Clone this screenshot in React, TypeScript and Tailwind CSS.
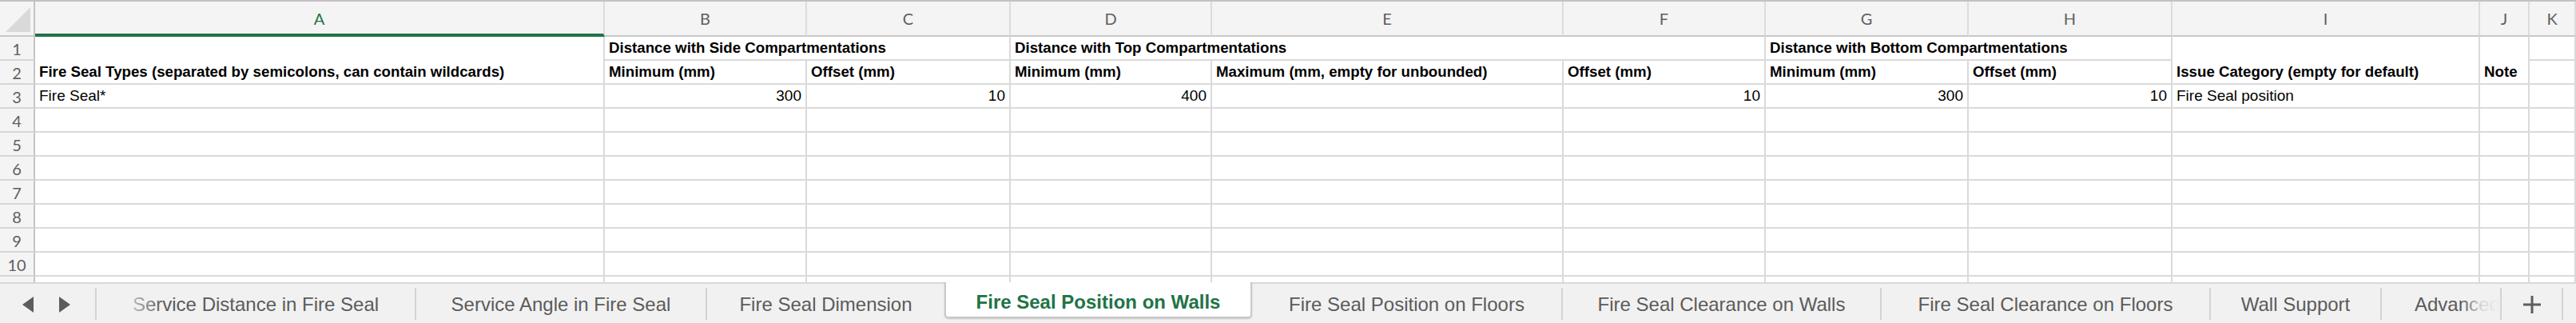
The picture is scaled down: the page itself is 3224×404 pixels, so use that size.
import React from 'react'

const LETTERS = ['A', 'B', 'C', 'D', 'E', 'F', 'G', 'H', 'I', 'J', 'K']
const cellFont = { fontFamily: '"Liberation Sans", Arial, sans-serif' }
const headFont = { fontFamily: 'Lato, "Liberation Sans", sans-serif' }

type CellProps = { children?: React.ReactNode; right?: boolean; bold?: boolean; span?: string }

function Cell({ children, right, bold, span = '' }: CellProps) {
  return (
    <div
      className={`flex items-end whitespace-nowrap border-r-2 border-b-2 border-[#dadada] bg-white px-[5px] pb-[3px] leading-[22px] text-black ${right ? 'justify-end' : ''} ${bold ? 'text-[18.7px] font-bold' : 'text-[19px]'} ${span}`}
    >
      {children}
    </div>
  )
}

function RowHead({ n }: { n?: number }) {
  return (
    <div
      style={headFont}
      className="flex items-center justify-center border-r-2 border-b-2 border-r-[#c4c4c4] border-b-[#d6d6d6] bg-[#f4f4f4] pt-[1px] text-[20px] text-[#5f5f5f]"
    >
      {n}
    </div>
  )
}

const row3 = ['Fire Seal*', '300', '10', '400', '', '10', '300', '10', 'Fire Seal position', '', '']
const row3Right = [false, true, true, true, false, true, true, true, false, false, false]

function Grid() {
  return (
    <div
      style={cellFont}
      className="grid h-[353px] grid-cols-[44px_713px_253px_255px_252px_440px_253px_254px_255px_385px_62px_1fr] grid-rows-[44px_repeat(11,30px)] overflow-hidden border-t-2 border-[#c2c2c2]"
    >
      {/* corner */}
      <div className="relative border-r-2 border-b-2 border-r-[#c4c4c4] border-b-[#c8c8c8] bg-[#f4f4f4]">
        <svg className="absolute left-[7px] top-[7px]" width="31" height="31" viewBox="0 0 31 31">
          <polygon points="31,0 31,31 0,31" fill="#d9d9d9" />
        </svg>
      </div>
      {LETTERS.map((l) => (
        <div
          key={l}
          style={headFont}
          className={`flex items-center justify-center border-r-2 border-r-[#dcdcdc] bg-[#f4f4f4] text-[20px] ${
            l === 'A' ? 'border-b-[4px] border-b-[#217346] pt-[2px] text-[#217346]' : 'border-b-2 border-b-[#c8c8c8] text-[#5f5f5f]'
          }`}
        >
          {l}
        </div>
      ))}

      {/* row 1 */}
      <RowHead n={1} />
      <Cell bold span="row-span-2">Fire Seal Types (separated by semicolons, can contain wildcards)</Cell>
      <Cell bold span="col-span-2">Distance with Side Compartmentations</Cell>
      <Cell bold span="col-span-3">Distance with Top Compartmentations</Cell>
      <Cell bold span="col-span-2">Distance with Bottom Compartmentations</Cell>
      <Cell bold span="row-span-2">Issue Category (empty for default)</Cell>
      <Cell bold span="row-span-2">Note</Cell>
      <Cell />

      {/* row 2 */}
      <RowHead n={2} />
      <Cell bold>Minimum (mm)</Cell>
      <Cell bold>Offset (mm)</Cell>
      <Cell bold>Minimum (mm)</Cell>
      <Cell bold>Maximum (mm, empty for unbounded)</Cell>
      <Cell bold>Offset (mm)</Cell>
      <Cell bold>Minimum (mm)</Cell>
      <Cell bold>Offset (mm)</Cell>
      <Cell />

      {/* row 3 */}
      <RowHead n={3} />
      {row3.map((v, i) => (
        <Cell key={i} right={row3Right[i]}>
          {v}
        </Cell>
      ))}

      {[4, 5, 6, 7, 8, 9, 10, 11].map((n) => (
        <React.Fragment key={n}>
          <RowHead n={n < 11 ? n : undefined} />
          {LETTERS.map((l) => (
            <Cell key={l} />
          ))}
        </React.Fragment>
      ))}
    </div>
  )
}

const Sep = () => <div className="h-[40px] w-[2px] shrink-0 self-center bg-[#d3d3d3]" />

function Tab({ label, w }: { label: string; w: string }) {
  return <div className={`flex shrink-0 items-center justify-center pt-[2px] ${w}`}>{label}</div>
}

function TabBar() {
  return (
    <div
      style={{ fontFamily: '"Liberation Sans", Arial, sans-serif' }}
      className="flex h-[51px] border-t-2 border-[#d8d8d8] bg-[#f1f1f1] text-[24px] text-[#5b5b5b]"
    >
      <div className="flex w-[119px] shrink-0 items-center gap-[32px] pl-[28px] pt-[2px]">
        <svg width="14" height="20" viewBox="0 0 14 20">
          <polygon points="14,0 14,20 0,10" fill="#5c5c5c" />
        </svg>
        <svg width="14" height="20" viewBox="0 0 14 20">
          <polygon points="0,0 0,20 14,10" fill="#5c5c5c" />
        </svg>
      </div>
      <Sep />
      <div className="relative flex w-[398px] shrink-0 items-center justify-center pt-[2px]">
        Service Distance in Fire Seal
        <div className="absolute left-[36px] top-0 h-full w-[46px] bg-linear-to-r from-[#f1f1f1]/80 to-transparent" />
      </div>
      <Sep />
      <Tab label="Service Angle in Fire Seal" w="w-[362px]" />
      <Sep />
      <Tab label="Fire Seal Dimension" w="w-[297px]" />
      <div className="relative z-10 -mt-[2px] flex h-[45px] w-[385px] shrink-0 items-center justify-center rounded-b-[5px] border-x-2 border-b-2 border-[#c9c9c9] bg-white pt-[7px] font-bold text-[#217346] shadow-[0_1px_2px_rgba(0,0,0,0.18)]">
        Fire Seal Position on Walls
      </div>
      <Tab label="Fire Seal Position on Floors" w="w-[387px]" />
      <Sep />
      <Tab label="Fire Seal Clearance on Walls" w="w-[397px]" />
      <Sep />
      <Tab label="Fire Seal Clearance on Floors" w="w-[410px]" />
      <Sep />
      <Tab label="Wall Support" w="w-[212px]" />
      <Sep />
      <div className="relative flex w-[148px] shrink-0 items-center overflow-hidden whitespace-nowrap pl-[41px] pt-[2px]">
        Advanced
        <div className="absolute right-0 top-0 h-full w-[48px] bg-linear-to-l from-[#f1f1f1] via-[#f1f1f1]/80 to-transparent" />
      </div>
      <Sep />
      <div className="flex w-[75px] shrink-0 items-center justify-center pt-[2px]">
        <svg width="22" height="22" viewBox="0 0 22 22">
          <rect x="9.5" y="0" width="3" height="22" fill="#5e5e5e" />
          <rect x="0" y="9.5" width="22" height="3" fill="#5e5e5e" />
        </svg>
      </div>
      <Sep />
    </div>
  )
}

export default function App() {
  return (
    <div className="h-[404px] w-[3224px] overflow-hidden bg-white">
      <Grid />
      <TabBar />
    </div>
  )
}
